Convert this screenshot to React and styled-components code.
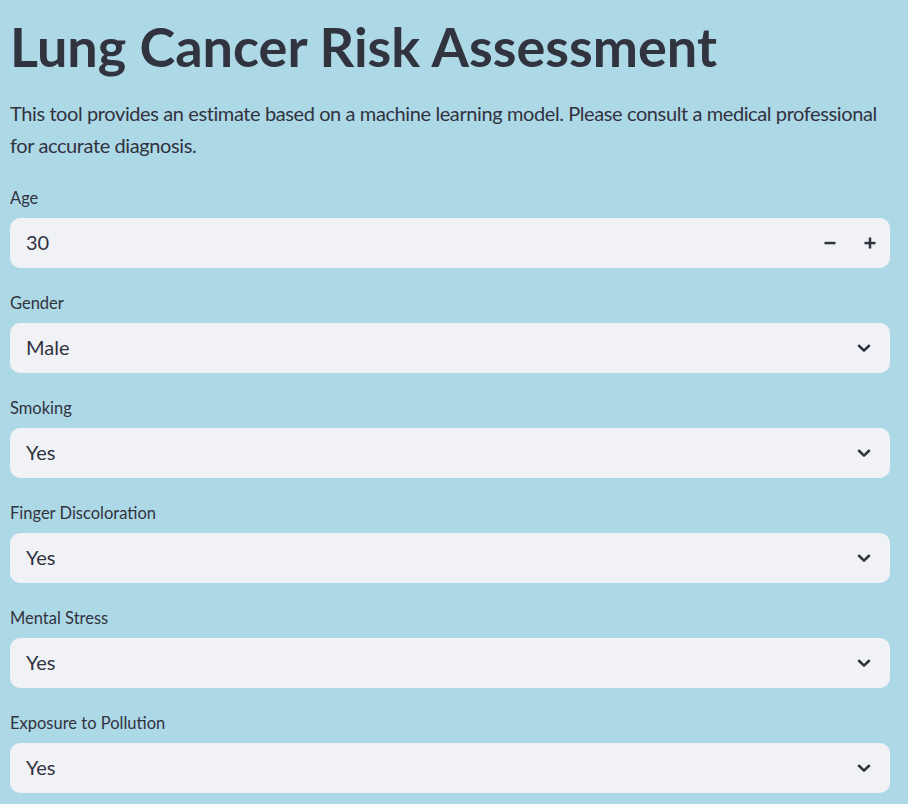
import React from "react";
import styled, { createGlobalStyle } from "styled-components";

const GlobalStyle = createGlobalStyle`
  html, body {
    margin: 0;
    padding: 0;
    background: #add8e6;
  }
  body {
    font-family: "Lato", "Noto Sans", sans-serif;
    color: #31333f;
  }
`;

const fields = [
  { label: "Gender", value: "Male" },
  { label: "Smoking", value: "Yes" },
  { label: "Finger Discoloration", value: "Yes" },
  { label: "Mental Stress", value: "Yes" },
  { label: "Exposure to Pollution", value: "Yes" },
];

function Chevron() {
  return (
    <svg width="16" height="16" viewBox="0 0 16 16">
      <path
        d="M3 5.8 L8 10.6 L13 5.8"
        fill="none"
        stroke="#31333f"
        strokeWidth="2.6"
        strokeLinecap="round"
        strokeLinejoin="round"
      />
    </svg>
  );
}

function Minus() {
  return (
    <svg width="12" height="12" viewBox="0 0 12 12">
      <rect x="0.5" y="4.8" width="11" height="2.5" fill="#31333f" />
    </svg>
  );
}

function Plus() {
  return (
    <svg width="12" height="12" viewBox="0 0 12 12">
      <rect x="0.5" y="4.8" width="11" height="2.5" fill="#31333f" />
      <rect x="4.75" y="0.5" width="2.5" height="11" fill="#31333f" />
    </svg>
  );
}

function App() {
  return (
    <>
      <GlobalStyle />
      <Page>
        <Title>Lung Cancer Risk Assessment</Title>
        <Intro>
          This tool provides an estimate based on a machine learning model.
          Please consult a medical professional for accurate diagnosis.
        </Intro>
        <Form>
          <Field>
            <Label>Age</Label>
            <Box>
              <Value>30</Value>
              <Steppers>
                <StepButton>
                  <Minus />
                </StepButton>
                <StepButton>
                  <Plus />
                </StepButton>
              </Steppers>
            </Box>
          </Field>
          {fields.map((f) => (
            <Field key={f.label}>
              <Label>{f.label}</Label>
              <Box $select>
                <Value>{f.value}</Value>
                <Chevron />
              </Box>
            </Field>
          ))}
        </Form>
      </Page>
    </>
  );
}

export default App;

const Page = styled.div`
  width: 880px;
  margin-left: 10px;
  padding-top: 14px;
`;

const Title = styled.h1`
  margin: 0;
  font-size: 54px;
  line-height: 66px;
  font-weight: 700;
  color: #31333f;
`;

const Intro = styled.p`
  margin: 17px 0 0;
  font-size: 20px;
  line-height: 32px;
  letter-spacing: -0.4px;
`;

const Form = styled.div`
  display: flex;
  flex-direction: column;
  gap: 21px;
  margin-top: 23px;
`;

const Field = styled.div`
  display: flex;
  flex-direction: column;
`;

const Label = styled.div`
  font-size: 16.5px;
  line-height: 28px;
  margin-bottom: 6px;
`;

const Box = styled.div`
  height: 50px;
  box-sizing: border-box;
  border-radius: 10px;
  background: #f0f2f6;
  display: flex;
  align-items: center;
  justify-content: space-between;
  padding: 0 ${(p) => (p.$select ? "18px" : "0")} 0 16px;
`;

const Value = styled.span`
  font-size: 20px;
  line-height: 1;
  margin-top: -3px;
`;

const Steppers = styled.div`
  display: flex;
  height: 100%;
`;

const StepButton = styled.div`
  width: 40px;
  display: flex;
  align-items: center;
  justify-content: center;
`;
